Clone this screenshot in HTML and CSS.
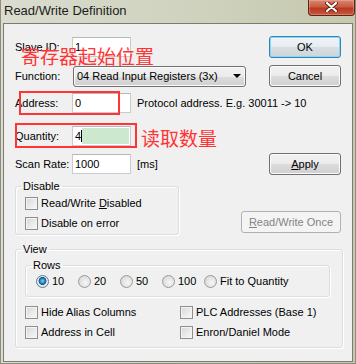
FILE: index.html
```html
<!DOCTYPE html>
<html>
<head>
<meta charset="utf-8">
<link rel="stylesheet" href="styles.css">
</head>
<body>
<div class="window">
  <div class="titlebar">
    <span class="title">Read/Write Definition</span>
    <div class="close">
      <svg width="13" height="10" viewBox="0 0 13 10">
        <path d="M2 1 L11 9 M11 1 L2 9" stroke="#5e2418" stroke-width="4" stroke-linecap="round"/>
        <path d="M2 1 L11 9 M11 1 L2 9" stroke="#ffffff" stroke-width="2.2" stroke-linecap="round"/>
      </svg>
    </div>
  </div>
  <div class="client">
    <div class="row r1">
      <span class="lbl">Slave ID:</span>
      <div class="tb">1</div>
      <span class="fill"></span>
      <button class="btn btn-default">OK</button>
    </div>
    <div class="row r2">
      <span class="lbl">Function:</span>
      <div class="combo"><span class="combo-text">04 Read Input Registers (3x)</span><span class="arrow"></span></div>
      <span class="fill"></span>
      <button class="btn">Cancel</button>
    </div>
    <div class="row r3">
      <span class="lbl">Address:</span>
      <div class="tb">0</div>
      <span class="hint">Protocol address. E.g. 30011 -&gt; 10</span>
    </div>
    <div class="row r4">
      <span class="lbl">Quantity:</span>
      <div class="tb tb-sel"><span>4</span><span class="caret"></span><span class="selfill"></span></div>
    </div>
    <div class="row r5">
      <span class="lbl">Scan Rate:</span>
      <div class="tb">1000</div>
      <span class="hint">[ms]</span>
      <span class="fill"></span>
      <button class="btn"><u>A</u>pply</button>
    </div>
    <div class="mid">
      <fieldset class="grp grp-disable">
        <legend>Disable</legend>
        <div class="chk"><span class="box"></span><span>Read/Write <u>D</u>isabled</span></div>
        <div class="chk"><span class="box"></span><span>Disable on error</span></div>
      </fieldset>
      <button class="btn btn-wide" disabled><u>R</u>ead/Write Once</button>
    </div>
    <fieldset class="grp grp-view">
      <legend>View</legend>
      <fieldset class="grp grp-rows">
        <legend>Rows</legend>
        <div class="radios">
          <div class="rad"><span class="dot on"></span><span>10</span></div>
          <div class="rad"><span class="dot"></span><span>20</span></div>
          <div class="rad"><span class="dot"></span><span>50</span></div>
          <div class="rad"><span class="dot"></span><span>100</span></div>
          <div class="rad"><span class="dot"></span><span>Fit to Quantity</span></div>
        </div>
      </fieldset>
      <div class="checks">
        <div class="chk"><span class="box"></span><span>Hide Alias Columns</span></div>
        <div class="chk"><span class="box"></span><span>PLC Addresses (Base 1)</span></div>
        <div class="chk"><span class="box"></span><span>Address in Cell</span></div>
        <div class="chk"><span class="box"></span><span>Enron/Daniel Mode</span></div>
      </div>
    </fieldset>
  </div>

  <div class="mark mark-addr"></div>
  <div class="mark mark-qty"></div>
  <div class="note note-start">寄存器起始位置</div>
  <div class="note note-qty">读取数量</div>
</div>
</body>
</html>
```

FILE: styles.css
```css
html, body {
  margin: 0;
  padding: 0;
}
body {
  font-family: "Liberation Sans", Arial, sans-serif;
  font-size: 11px;
  color: #000;
  background: #d4d3c0;
}
.window {
  position: relative;
  box-sizing: border-box;
  width: 356px;
  height: 364px;
  border: 1px solid #8e8c7c;
  border-top: none;
  background: linear-gradient(90deg, #dadccf 0%, #d0d3bf 50%, #c6c9ae 100%);
}
.titlebar {
  display: flex;
  align-items: flex-start;
  height: 23px;
}
.title {
  font-size: 13px;
  line-height: 15px;
  padding: 3px 0 0 3px;
  color: #1c1c1c;
}
.close {
  margin-left: auto;
  box-sizing: border-box;
  width: 47px;
  height: 16px;
  border: 1px solid #5a2418;
  border-top: none;
  border-radius: 0 0 4px 4px;
  background: linear-gradient(#d98773 0%, #cb5a42 45%, #b53a22 55%, #c9583d 100%);
  box-shadow: inset 0 0 0 1px rgba(255, 200, 180, 0.35);
  display: flex;
  justify-content: center;
  align-items: center;
}
.close svg {
  margin-top: -2px;
}
.client {
  box-sizing: border-box;
  height: 339px;
  margin: 0 2px;
  border: 1px solid #7c7b72;
  background: #f0f0f0;
  padding: 12px 11px 0 11px;
}
.row {
  display: flex;
  align-items: center;
  height: 22px;
}
.r2 { margin-top: 7px; }
.r3 { margin-top: 5px; }
.r4 { margin-top: 11px; }
.r5 { margin-top: 6px; }
.lbl {
  width: 57px;
  flex: none;
}
.tb {
  box-sizing: border-box;
  width: 59px;
  height: 20px;
  border: 1px solid #c9cbcf;
  border-top-color: #b4b7bc;
  background: #fff;
  padding: 0 2px;
  display: flex;
  align-items: center;
  flex: none;
}
.tb-sel {
  padding: 1px 1px 1px 2px;
  align-items: stretch;
}
.tb-sel span:first-child {
  display: flex;
  align-items: center;
}
.caret {
  width: 1px;
  background: #000;
  margin: 2px 0;
}
.selfill {
  flex: 1;
  background: #cce8cf;
}
.hint {
  margin-left: 6px;
  white-space: nowrap;
}
.fill {
  flex: 1;
}
.btn {
  box-sizing: border-box;
  width: 72px;
  height: 22px;
  flex: none;
  padding: 0;
  border: 1px solid #707070;
  border-radius: 3px;
  background: linear-gradient(#f2f2f2 0%, #ebebeb 50%, #dddddd 50%, #cfcfcf 100%);
  box-shadow: inset 0 0 0 1px #fbfbfb;
  font-family: "Liberation Sans", Arial, sans-serif;
  font-size: 11px;
  color: #000;
}
.btn-default {
  border-color: #3c7fb1;
  box-shadow: inset 0 0 0 1px #7fdcf5;
  background: linear-gradient(#eef4f7 0%, #e6ecef 50%, #d8dfe3 50%, #ced5da 100%);
}
.btn-wide {
  width: 100px;
  margin-left: auto;
  margin-bottom: 2px;
}
.btn:disabled {
  border-color: #adb2b5;
  background: #f4f4f4;
  box-shadow: none;
  color: #838383;
}
.combo {
  box-sizing: border-box;
  width: 173px;
  height: 21px;
  margin-left: 1px;
  flex: none;
  border: 1px solid #707070;
  border-radius: 3px;
  background: linear-gradient(#f2f2f2 0%, #ebebeb 50%, #dddddd 50%, #cfcfcf 100%);
  box-shadow: inset 0 0 0 1px #fbfbfb;
  display: flex;
  align-items: center;
  padding-left: 3px;
}
.combo-text {
  flex: 1;
  white-space: nowrap;
}
.arrow {
  width: 0;
  height: 0;
  border-left: 4px solid transparent;
  border-right: 4px solid transparent;
  border-top: 4px solid #000;
  margin-right: 4px;
}
.mid {
  display: flex;
  align-items: flex-end;
  margin-top: 5px;
}
.grp {
  box-sizing: border-box;
  margin: 0;
  border: 1px solid #d5dfe5;
  border-radius: 3px;
  box-shadow: inset 1px 1px 0 #fff, 1px 1px 0 #fff;
  min-width: 0;
}
.grp legend {
  padding: 0 2px;
  margin-left: -4px;
  line-height: 13px;
}
.grp-disable {
  width: 164px;
  height: 55px;
  padding: 0 9px;
}
.chk {
  display: flex;
  align-items: center;
  height: 20px;
  white-space: nowrap;
}
.box {
  box-sizing: border-box;
  width: 13px;
  height: 13px;
  margin-right: 3px;
  flex: none;
  border: 1px solid #8e8f8f;
  background: linear-gradient(135deg, #d6d6d6 0%, #ececec 60%, #f8f8f8 100%);
  box-shadow: inset 0 0 0 1px #f4f4f4;
}
.grp-view {
  width: 328px;
  height: 105px;
  margin-top: 8px;
  padding: 0 9px;
}
.grp-rows {
  width: 305px;
  height: 38px;
  margin-top: 3px;
  padding: 0 10px;
}
.grp-rows legend {
  margin-left: -5px;
}
.radios {
  display: flex;
  align-items: center;
  height: 18px;
}
.rad {
  display: flex;
  align-items: center;
  width: 42px;
  flex: none;
  white-space: nowrap;
}
.rad:last-child {
  width: auto;
}
.dot {
  box-sizing: border-box;
  width: 13px;
  height: 13px;
  margin-right: 3px;
  border-radius: 50%;
  border: 1px solid #9a9a9a;
  background: radial-gradient(circle at 60% 60%, #f6f6f6 0%, #dcdcdc 70%, #cfcfcf 100%);
}
.dot.on {
  border-color: #5d7c93;
  background: radial-gradient(circle at 50% 45%, #7fd0f7 0%, #2a82c0 30%, #154f7a 45%, #e9eef2 52%, #d3dbe1 100%);
}
.checks {
  display: grid;
  grid-template-columns: 155px auto;
  margin-top: 5px;
}
.mark {
  position: absolute;
  box-sizing: border-box;
  border: 2px solid #ff3434;
}
.mark-addr {
  left: 18px;
  top: 91px;
  width: 101px;
  height: 24px;
}
.mark-qty {
  left: 14px;
  top: 123px;
  width: 122px;
  height: 25px;
}
.note {
  position: absolute;
  font-family: "Noto Sans CJK SC", sans-serif;
  font-size: 19px;
  line-height: 19px;
  color: #ff3434;
  white-space: nowrap;
}
.note-start {
  left: 20px;
  top: 46px;
}
.note-qty {
  left: 140px;
  top: 128px;
}
```
